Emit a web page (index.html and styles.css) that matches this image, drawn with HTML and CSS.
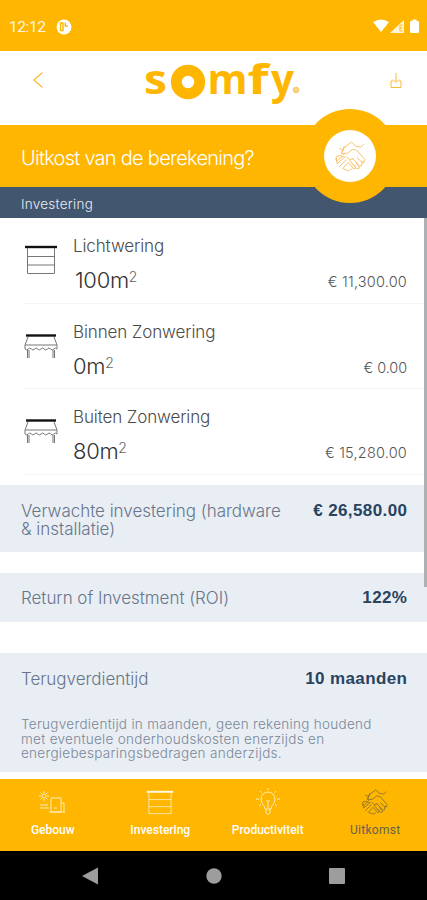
FILE: index.html
```html
<!DOCTYPE html>
<html lang="nl">
<head>
<meta charset="utf-8">
<meta name="viewport" content="width=device-width, initial-scale=1">
<title>Somfy</title>
<link rel="stylesheet" href="styles.css">
</head>
<body>
<svg class="defs" aria-hidden="true">
  <symbol id="hands" viewBox="0 0 32 32">
    <path d="M8 12 10 6M5 8l4 2M9 8l8-6 4 4 5 1 3-3M10 7l-3 6h6l5-4 4 1 8 9-3 3M10 13l-2 2M2 16l4-1 5 2M2 16l1 7M1 19l3 1M4 19l4-3M3 23l7-6M5 26l7-7M8 28l6-6M12 16l3 3 4-1M15 19l4 6M18 18l6 6M22 17l6 5M14 22l5 6 2-1-2-3M19 24l3 4 3-1-4-5M24 25l3 0 0-3M28 22l2-1M9 28l3 1 2 1 3-2"/>
  </symbol>
  <symbol id="blind" viewBox="0 0 34 30">
    <path class="thick" d="M1 2h32"/>
    <path d="M3.500 3v25.500h27V3M3.500 11.500h27M3.500 20h27"/>
  </symbol>
  <symbol id="awning" viewBox="0 0 34 28">
    <path class="thick" d="M2 2.500h30"/>
    <path d="M4 4 1 12v4M30 4l3 8v4M1 12h32M1 16q1.600 2 3.200 0t3.200 0 3.200 0 3.200 0 3.200 0 3.200 0 3.200 0 3.200 0 3.200 0 3.200 0M3.500 17v8M5 17v8M29 17v8M30.500 17v8"/>
  </symbol>
</svg>

<div class="status">
  <span class="clock">12:12</span>
  <svg class="app-dot" viewBox="0 0 16 16"><circle cx="8" cy="8" r="7.500" fill="#fff"/><path d="M7 4H4.500v7.500H7zM9.300 3.500v3.500h2.500" fill="none" stroke="#ffb600" stroke-width="1.400"/></svg>
  <svg class="signals" viewBox="0 0 48 15"><path d="M0 3Q8-2 16 3L8 13z" fill="#fff"/><path d="M17 14 31 1v13z" fill="#fff" opacity=".85"/><path d="M27 6v6M29.500 6h-2M29.500 9h-2M29.500 12h-2" stroke="#ffb600" fill="none"/><path d="M37 3q0-1 1-1h1.500V.5h4V2H45q1 0 1 1v10q0 1-1 1h-7q-1 0-1-1z" fill="#fff"/></svg>
</div>

<header class="header">
  <svg class="back" viewBox="0 0 12 18"><path d="M10.500 1.500 2 9l8.500 7.500"/></svg>
  <svg class="logo" viewBox="0 0 158 46">
    <g class="logo-letters">
      <text x="0" y="38" textLength="23" lengthAdjust="spacingAndGlyphs">s</text>
      <text x="63.500" y="38" textLength="40" lengthAdjust="spacingAndGlyphs">m</text>
      <text x="103.500" y="38" textLength="21" lengthAdjust="spacingAndGlyphs">f</text>
      <text x="127" y="38" textLength="23" lengthAdjust="spacingAndGlyphs">y</text>
    </g>
    <circle class="logo-o" cx="44" cy="26" r="11.700"/>
    <circle class="logo-mark" cx="152" cy="34" r="2.800"/>
  </svg>
  <svg class="download" viewBox="0 0 12 17"><path d="M6 1v9M3 7.500l3 3 3-3M3 9H1v6.500h10V9H9"/></svg>
</header>

<section class="title">
  <h1>Uitkost van de berekening?</h1>
  <div class="badge"><div class="badge-inner"><svg class="badge-icon"><use href="#hands"/></svg></div></div>
</section>

<div class="subtitle">Investering</div>

<main class="content">
  <div class="scrollbar"></div>
  <div class="item">
    <svg class="item-icon blind"><use href="#blind"/></svg>
    <div class="item-text"><div class="name">Lichtwering</div><div class="area wide">100m<span class="sq">2</span></div></div>
    <div class="price">€ 11,300.00</div>
  </div>
  <div class="item">
    <svg class="item-icon"><use href="#awning"/></svg>
    <div class="item-text"><div class="name">Binnen Zonwering</div><div class="area">0m<span class="sq">2</span></div></div>
    <div class="price short">€ 0.00</div>
  </div>
  <div class="item">
    <svg class="item-icon"><use href="#awning"/></svg>
    <div class="item-text"><div class="name">Buiten Zonwering</div><div class="area">80m<span class="sq">2</span></div></div>
    <div class="price">€ 15,280.00</div>
  </div>

  <div class="card total">
    <div class="row"><div class="label"><div>Verwachte investering (hardware</div><div>&amp; installatie)</div></div><b>€ 26,580.00</b></div>
  </div>
  <div class="card roi">
    <div class="row"><div class="label">Return of Investment (ROI)</div><b>122%</b></div>
  </div>
  <div class="card payback">
    <div class="row"><div class="label">Terugverdientijd</div><b>10 maanden</b></div>
    <p>Terugverdientijd in maanden, geen rekening houdend<br>met eventuele onderhoudskosten enerzijds en<br>energiebesparingsbedragen anderzijds.</p>
  </div>
</main>

<nav class="tabs">
  <div class="tab"><svg class="tab-icon" viewBox="0 0 28 28"><circle cx="5" cy="8" r="2"/><path d="M5 3v2M5 11v2M0 8h2M8 8h2M1.500 4.500l1.500 1.500M8.500 4.500 7 6M1.500 11.500 3 10M8.500 11.500 7 10M1 17h8M1 20h9M12 24V10h10v14zM22 15h3v9M15 20h3M10 24h16"/></svg><span>Gebouw</span></div>
  <div class="tab"><svg class="tab-icon tab-blind"><use href="#blind"/></svg><span>Investering</span></div>
  <div class="tab"><svg class="tab-icon" viewBox="0 0 28 28"><path d="M11 21c0-4-4-5-4-10a7 7 0 0 1 14 0c0 5-4 6-4 10zM12 21v4q2 3 4 0v-4M14 20v-6l-1.500-2M14 14l1.500-2M14 0v2M6 3l1.500 1.500M22 3l-1.500 1.500M2 11h3M23 11h3M5 18l2-1.500M23 18l-2-1.500"/></svg><span>Productiviteit</span></div>
  <div class="tab active"><svg class="tab-icon tab-hands" viewBox="0 0 32 32"><use href="#hands" width="32" height="32"/></svg><span>Uitkomst</span></div>
</nav>

<div class="sysnav">
  <svg viewBox="0 0 18 18"><path d="M1 9 17 .500v17z"/></svg>
  <svg viewBox="0 0 18 18"><circle cx="9" cy="9" r="7.700"/></svg>
  <svg viewBox="0 0 18 18"><rect x="1" y="1" width="16" height="16" rx="1"/></svg>
</div>
</body>
</html>
```
FILE: styles.css
```css
* { box-sizing: border-box; }
body {
  margin: 0;
  width: 427px;
  height: 900px;
  display: flex;
  flex-direction: column;
  overflow: hidden;
  background: #fff;
  font-family: Inter, "Liberation Sans", sans-serif;
  font-weight: 300;
}
svg { display: block; flex: none; }
.defs { position: absolute; width: 0; height: 0; }

.status {
  height: 51px;
  flex: none;
  padding: 2px 6px 0 9px;
  display: flex;
  align-items: center;
  background: #ffb600;
  color: #fff;
}
.clock { width: 47px; font: 400 15.5px Roboto, sans-serif; letter-spacing: -.4px; opacity: .9; }
.app-dot { width: 16px; height: 16px; }
.signals { width: 48px; height: 15px; margin-left: auto; }

.header {
  height: 74px;
  flex: none;
  padding: 0 25px 0 32px;
  display: flex;
  align-items: flex-start;
}
.back, .download { fill: none; stroke: #fcb93d; }
.back { width: 12px; height: 18px; margin-top: 20px; stroke-width: 1.3; }
.logo { width: 158px; height: 46px; margin: 5px 0 0 100px; overflow: visible; }
.logo-letters {
  font: 700 42px "Open Sans", sans-serif;
  fill: #ffb600;
}
.logo-o { fill: none; stroke: #ffb600; stroke-width: 11; }
.logo-mark { fill: #fbd382; stroke: #fbc55c; }
.download { width: 12px; height: 17px; margin: 21px 0 0 auto; }

.title {
  position: relative;
  height: 62px;
  flex: none;
  padding: 4px 21px 0;
  display: flex;
  align-items: center;
  background: #ffb600;
}
h1 { margin: 0; font-size: 20px; font-weight: 300; letter-spacing: -.73px; color: #fff; white-space: nowrap; }
.badge {
  position: absolute;
  z-index: 1;
  left: 303px;
  top: -16px;
  width: 94px;
  height: 94px;
  border-radius: 50%;
  background: #ffb600;
  display: grid;
  place-items: center;
}
.badge-inner { width: 52px; height: 52px; border-radius: 50%; background: #fff; display: grid; place-items: center; }
.badge-icon { width: 33px; height: 33px; fill: none; stroke: #f8be60; stroke-width: .9; }

.subtitle {
  height: 31px;
  flex: none;
  padding-left: 21px;
  line-height: 34px;
  background: #43566f;
  color: #e7edf4;
  font-size: 13.5px;
  letter-spacing: .25px;
}

.content { position: relative; height: 561px; flex: none; }
.scrollbar { position: absolute; z-index: 1; right: 0; top: 0; width: 3px; height: 369px; background: #aeb1b4; }
.item {
  height: 85.5px;
  margin-left: 24px;
  padding-right: 20px;
  display: flex;
  border-bottom: 1px solid #f5f5f5;
}
.item-icon { width: 34px; height: 28px; margin-top: 29px; fill: none; stroke: #777; stroke-width: 1; --thick: #111; }
.item-icon.blind { height: 30px; margin-top: 27px; }
.thick { stroke: var(--thick); stroke-width: 2.4; }
.item-text { margin-left: 15px; color: #4b4b4b; }
.name { margin-top: 17px; height: 22px; line-height: 22px; font-size: 17px; letter-spacing: -.12px; }
.area { margin-top: 10px; height: 26px; line-height: 26px; font-size: 22px; letter-spacing: -.3px; color: #333; }
.area.wide { padding-left: 2px; }
.sq { font-size: 14px; position: relative; top: -6px; color: #666; }
.price { margin: 54px 0 0 auto; height: 20px; line-height: 20px; font-size: 14.5px; letter-spacing: .2px; color: #555; }
.price.short { letter-spacing: -.1px; }

.card { background: #e8eef4; padding: 0 20px 0 21px; color: #68758a; }
.row { display: flex; justify-content: space-between; line-height: 18px; }
.label { font-size: 17px; letter-spacing: -.03px; white-space: nowrap; }
.row b { font: 700 17px/18px "Liberation Sans", sans-serif; letter-spacing: .4px; margin-right: -.4px; color: #29435f; white-space: nowrap; }
.total { height: 67px; margin-top: 10.5px; padding-top: 17px; }
.roi { height: 49px; margin-top: 21px; padding-top: 16px; }
.payback { height: 119px; margin-top: 31px; padding-top: 17px; }
.payback p { margin: 29px 0 0; font-size: 13.5px; line-height: 14.7px; letter-spacing: .3px; white-space: nowrap; color: #7c8798; }

.tabs {
  height: 72px;
  flex: none;
  display: grid;
  grid-template-columns: repeat(4, 107.5px);
  margin-left: -1px;
  background: #ffb600;
  color: #fff;
}
.tab { display: flex; flex-direction: column; align-items: center; font: 500 12px/16px Roboto, sans-serif; }
.tab-icon { width: 28px; height: 28px; margin: 9px 0 6px; fill: none; stroke: #ffecba; stroke-width: 1; }
.tab-blind { width: 28px; height: 25px; margin: 11px 0 7px; stroke: #fff0c4; --thick: #fff8e2; }
.tab-hands { stroke: #8a7434; }
.active { color: #66624f; font-weight: 400; letter-spacing: .3px; }

.sysnav {
  height: 49px;
  flex: none;
  padding: 0 81px;
  display: flex;
  align-items: center;
  justify-content: space-between;
  background: #000;
}
.sysnav svg { width: 18px; height: 18px; fill: #9d9d9d; }
```
